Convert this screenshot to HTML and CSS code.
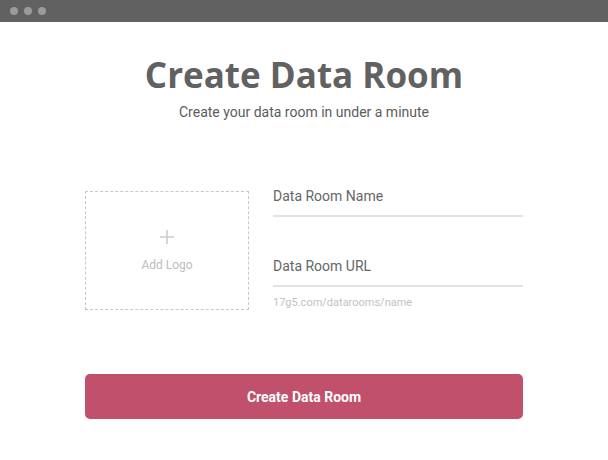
FILE: index.html
```html
<!DOCTYPE html>
<html>
<head>
  <title>Create Data Room</title>
  <link rel="stylesheet" href="styles.css">
</head>
<body>
  <div class="titlebar">
    <span class="dot"></span>
    <span class="dot"></span>
    <span class="dot"></span>
  </div>

  <div id="container">
    <h1 class="title">Create Data Room</h1>
    <p class="subtitle">Create your data room in under a minute</p>

    <div class="form">
      <div class="logo-box">
        <svg class="plus" width="16" height="16" viewBox="0 0 16 16">
          <path d="M8 1V15M1 8H15" stroke="#cccccc" stroke-width="1.6" fill="none"/>
        </svg>
        <span class="logo-text">Add Logo</span>
      </div>

      <div class="fields">
        <div class="field">
          <label class="field-label">Data Room Name</label>
          <div class="field-line"></div>
        </div>
        <div class="field field-url">
          <label class="field-label">Data Room URL</label>
          <div class="field-line"></div>
          <div class="field-hint">17g5.com/datarooms/name</div>
        </div>
      </div>
    </div>

    <button class="create-btn">Create Data Room</button>
  </div>
</body>
</html>
```

FILE: styles.css
```css
body {
  margin: 0;
  background-color: #ffffff;
  font-family: Roboto, "Liberation Sans", sans-serif;
}

.titlebar {
  height: 22px;
  background-color: #616161;
  display: flex;
  align-items: center;
  gap: 6px;
  padding-left: 10px;
}

.dot {
  width: 8px;
  height: 8px;
  border-radius: 50%;
  background-color: #9b9b9b;
}

#container {
  width: 438px;
  margin: 0 auto;
}

.title {
  margin: 33px 0 0;
  font-family: "Open Sans", sans-serif;
  font-weight: 700;
  font-size: 35px;
  line-height: 40px;
  color: #616161;
  text-align: center;
}

.subtitle {
  margin: 8px 0 0;
  font-size: 14px;
  line-height: 18px;
  color: #5c5c5c;
  text-align: center;
}

.form {
  display: flex;
  gap: 24px;
  margin-top: 70px;
}

.logo-box {
  width: 162px;
  height: 117px;
  border: 1px dashed #c8c8c8;
  display: flex;
  flex-direction: column;
  align-items: center;
  justify-content: center;
}

.plus {
  margin-top: 0;
}

.logo-text {
  margin-top: 13px;
  font-size: 12px;
  color: #bdbdbd;
}

.fields {
  width: 250px;
}

.field-label {
  display: block;
  font-size: 14px;
  line-height: 16px;
  color: #666666;
  margin-top: -3px;
}

.field-line {
  height: 2px;
  background-color: #e3e3e3;
  margin-top: 11px;
}

.field-url {
  margin-top: 44px;
}

.field-hint {
  margin-top: 9px;
  font-size: 11px;
  line-height: 13px;
  color: #c2c2c2;
}

.create-btn {
  display: block;
  width: 100%;
  height: 45px;
  margin-top: 64px;
  border: none;
  border-radius: 5px;
  background-color: #c0506b;
  color: #ffffff;
  font-family: Roboto, sans-serif;
  font-weight: 700;
  font-size: 14px;
}
```
